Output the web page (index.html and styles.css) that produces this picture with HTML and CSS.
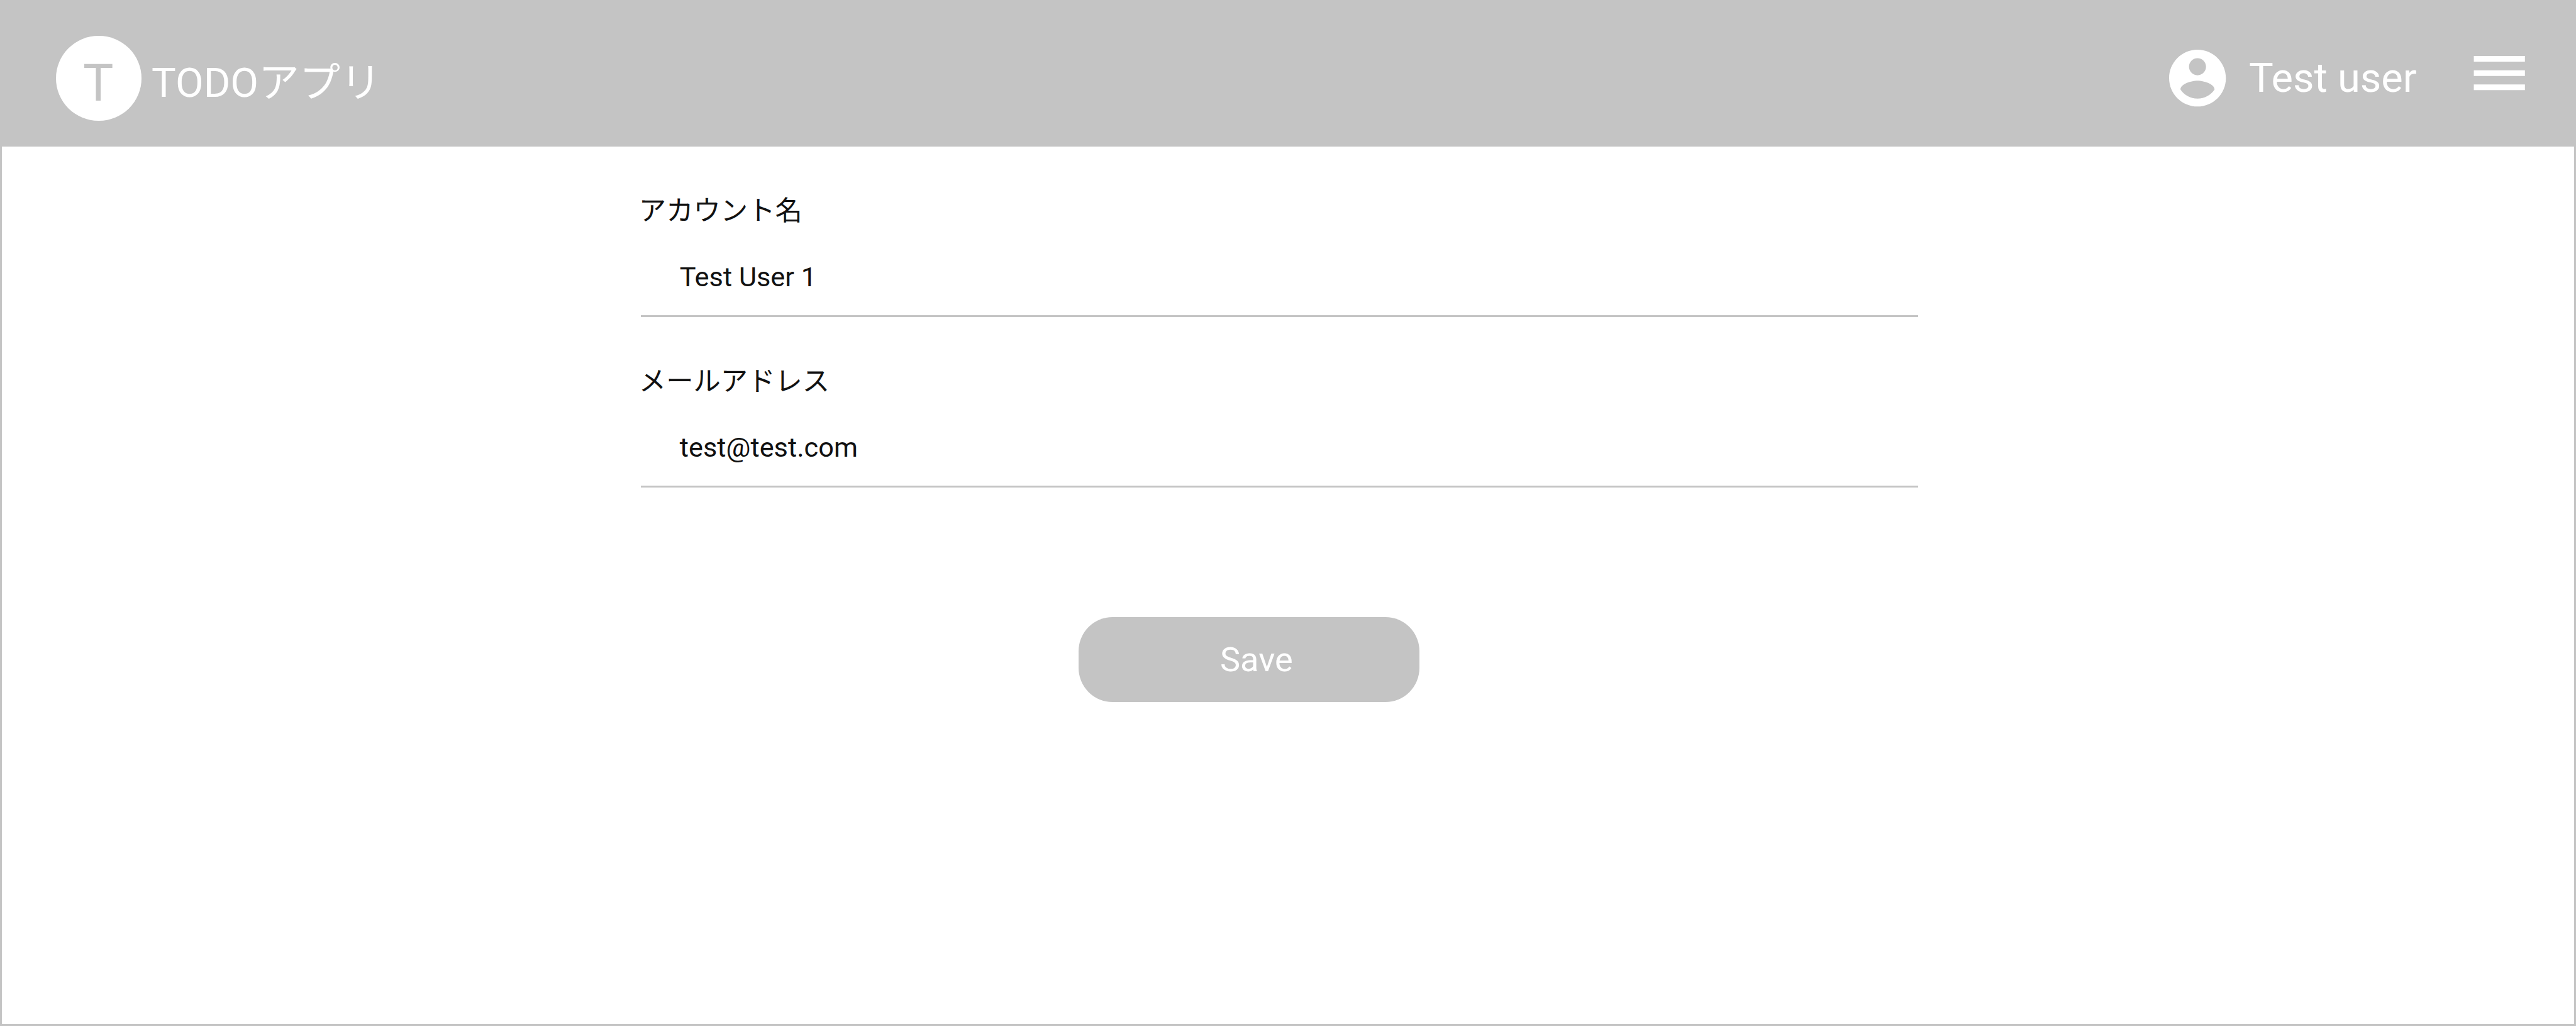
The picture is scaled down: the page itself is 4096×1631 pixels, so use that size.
FILE: index.html
```html
<!DOCTYPE html>
<html lang="ja">
<head>
  <meta charset="utf-8">
  <title>TODOアプリ</title>
  <link rel="stylesheet" href="styles.css">
</head>
<body>
  <div class="page">
    <header class="header">
      <div class="brand">
        <div class="brand-mark"><span class="brand-letter">T</span></div>
        <div class="brand-name">TODOアプリ</div>
      </div>
      <div class="account">
        <svg class="icon account-icon" viewBox="0 0 24 24"><path d="M12 2C6.48 2 2 6.48 2 12s4.48 10 10 10 10-4.48 10-10S17.52 2 12 2zm0 3c1.66 0 3 1.34 3 3s-1.34 3-3 3-3-1.34-3-3 1.34-3 3-3zm0 14.2c-2.5 0-4.71-1.28-6-3.22.03-1.99 4-3.08 6-3.08 1.99 0 5.97 1.09 6 3.08-1.29 1.94-3.5 3.22-6 3.22z"/></svg>
        <div class="account-name">Test user</div>
        <svg class="icon menu-icon" viewBox="0 0 24 24"><path d="M3 18h18v-2H3v2zm0-5h18v-2H3v2zm0-7v2h18V6H3z"/></svg>
      </div>
    </header>
    <main class="form">
      <div class="field">
        <div class="label">アカウント名</div>
        <div class="value">Test User 1</div>
      </div>
      <div class="field">
        <div class="label">メールアドレス</div>
        <div class="value">test@test.com</div>
      </div>
      <button class="save" type="button">Save</button>
    </main>
  </div>
</body>
</html>
```
FILE: styles.css
```css
/* 0.1rem is one design unit; the layout is 1512 units wide */
html {
  font-size: calc(100vw / 151.2);
}

*,
*::before,
*::after {
  box-sizing: border-box;
}

body {
  margin: 0;
  background: #fff;
  color: #111;
  font-family: Roboto, "Noto Sans CJK JP", sans-serif;
  font-size: 1.6rem;
  line-height: 1.9rem;
}

/* The padding shows as the thin frame round the page */
.page {
  display: flex;
  flex-direction: column;
  height: 100vh;
  overflow: hidden;
  padding: 0.1rem;
  background: #c4c4c4;
}

.header {
  display: flex;
  justify-content: space-between;
  align-items: flex-start;
  height: 8.5rem;
  padding: 0 2.4rem 0 3.2rem;
  background: #c4c4c4;
  color: #fff;
}

.brand,
.account {
  display: flex;
  align-items: flex-start;
  font-size: 2.4rem;
  line-height: 2.8rem;
  white-space: nowrap;
}

.brand-mark {
  width: 5rem;
  height: 5rem;
  margin-top: 2rem;
  padding: 1.07rem 0 0 1.57rem;
  border-radius: 50%;
  background: #fff;
}

.brand-letter {
  display: block;
  color: #c4c4c4;
  font-size: 3rem;
  line-height: 3.5rem;
}

.brand-name {
  margin: 3.42rem 0 0 0.6rem;
}

.icon {
  width: 4rem;
  height: 4rem;
  fill: #fff;
}

.account-icon {
  margin-top: 2.5rem;
}

.account-name {
  width: 12.7rem;
  margin: 3.12rem 0 0 1rem;
}

.menu-icon {
  margin-top: 2.2rem;
}

.form {
  flex: 1;
  padding: 0 38.5rem 0 37.5rem;
  background: #fff;
}

.field {
  height: 10rem;
  padding-top: 2.835rem;
  border-bottom: 3px solid #c4c4c4;
}

.label {
  margin-left: -0.1rem;
}

.value {
  margin-top: 1.985rem;
  padding-left: 2.3rem;
}

.save {
  display: block;
  width: 20rem;
  height: 5rem;
  margin: 7.6rem 0 0 25.7rem;
  padding: 0.087rem 0 0 0.9rem;
  border: 0;
  border-radius: 2rem;
  background: #c4c4c4;
  color: #fff;
  font: inherit;
  font-size: 2rem;
  line-height: 2.3rem;
}
```
